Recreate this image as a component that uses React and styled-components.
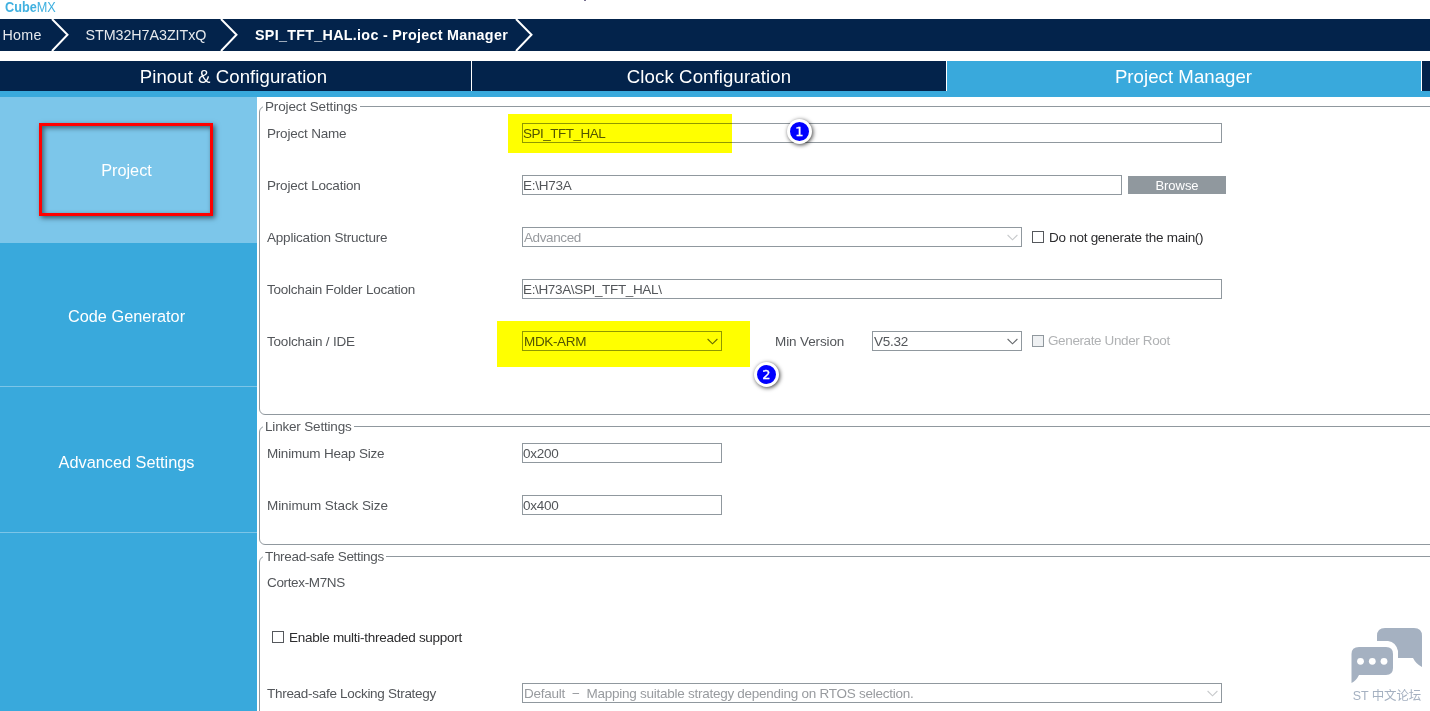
import React from "react";
import styled, { createGlobalStyle } from "styled-components";

const navy = "#03234b";
const sky = "#39a9dc";
const line = "#90989e";

const Global = createGlobalStyle`
  * { box-sizing: border-box; }
  html, body { margin: 0; height: 100%; overflow: hidden; background: #fff; }
  body { font-family: "Liberation Sans", Arial, "Noto Sans CJK SC", sans-serif; font-size: 13.5px; color: #53565a; }
`;

const Page = styled.div`
  position: relative;
  display: flex;
  flex-direction: column;
  width: 1430px;
  height: 711px;
  overflow: hidden;
  background: #fff;
  white-space: pre;
`;

const Header = styled.header`
  display: flex;
  height: 19px;
  padding-left: 5px;
  overflow: hidden;
`;

const Brand = styled.div`
  width: 51px;
  color: #41b1e0;
  font-size: 15.5px;
  line-height: 13px;
  transform: scaleX(0.82);
  transform-origin: 0 0;
`;

const Speck = styled.i`
  width: 2px;
  height: 1px;
  margin-left: 528px;
  background: #77708f;
`;

const Crumbs = styled.nav`
  display: flex;
  align-items: center;
  height: 32px;
  margin-bottom: 10px;
  background: ${navy};
  color: #e6e9ed;
  font-size: 14.3px;
`;

const Crumb = styled.span`
  width: ${(p) => p.$w}px;
  padding-left: ${(p) => p.$pad}px;
  color: ${(p) => (p.$bold ? "#fff" : "inherit")};
  font-weight: ${(p) => (p.$bold ? 700 : 400)};
  letter-spacing: ${(p) => p.$ls}px;
`;

const Tabs = styled.nav`
  display: flex;
  height: 36px;
  flex: none;
  border-bottom: 6px solid ${sky};
`;

const Tab = styled.div`
  width: ${(p) => p.$w}px;
  flex: none;
  padding-right: ${(p) => p.$shift || 0}px;
  border-right: 1px solid #fff;
  background: ${(p) => (p.$active ? sky : navy)};
  color: #fff;
  font-size: 18.6px;
  line-height: 32px;
  letter-spacing: ${(p) => p.$ls || 0}px;
  text-align: center;
`;

const Body = styled.div`
  display: flex;
  flex: 1;
  min-height: 0;
`;

const Sidebar = styled.aside`
  width: 257px;
  flex: none;
  background: ${sky};
`;

const SideItem = styled.div`
  display: flex;
  align-items: center;
  justify-content: center;
  height: ${(p) => p.$h}px;
  padding: ${(p) => p.$drop}px 4px 0 0;
  border-bottom: ${(p) => (p.$active ? "0" : "1px solid #7cc5e8")};
  background: ${(p) => (p.$active ? "#7cc6ea" : "transparent")};
  color: #fff;
  font-size: 16.3px;
  letter-spacing: ${(p) => p.$ls}px;
`;

const Panels = styled.main`
  display: flex;
  flex: 1;
  flex-direction: column;
  padding: 9px 0 0 2px;
  min-width: 0;
`;

const Group = styled.section`
  height: ${(p) => p.$h}px;
  flex: none;
  margin: 0 -10px 11px 0;
  border: 1px solid ${line};
  border-radius: 6px;
`;

const Legend = styled.h2`
  width: ${(p) => p.$w}px;
  height: 16px;
  margin: -8px 0 0 3px;
  padding-left: 2px;
  background: #fff;
  font-size: 13.5px;
  font-weight: 400;
  line-height: 16px;
  letter-spacing: ${(p) => p.$ls ?? -0.13}px;
`;

const Row = styled.div`
  display: flex;
  align-items: center;
  height: 20px;
  margin-top: ${(p) => p.$gap ?? 32}px;
  padding-left: 7px;
`;

const Label = styled.span`
  width: ${(p) => p.$w || 255}px;
  flex: none;
  margin-left: ${(p) => p.$ml || 0}px;
  letter-spacing: ${(p) => p.$ls ?? -0.2}px;
`;

const Field = styled.div`
  display: flex;
  align-items: center;
  justify-content: space-between;
  width: ${(p) => p.$w}px;
  height: 20px;
  flex: none;
  padding: 0 3.5px 0 ${(p) => (p.$select ? 1 : 0)}px;
  border: 1px solid ${line};
  background: #fff;
  color: ${(p) => (p.$off ? "#989b9f" : "#53565a")};
  letter-spacing: ${(p) => p.$ls ?? -0.27}px;
`;

const BrowseButton = styled.button`
  width: 98px;
  height: 18px;
  margin-left: 6px;
  padding: 1px 0 0;
  border: 0;
  background: #90989e;
  color: #fff;
  font: 13px/17px "Liberation Sans", sans-serif;
  letter-spacing: -0.05px;
`;

const Box = styled.i`
  width: 12px;
  height: 12px;
  flex: none;
  margin: 0 ${(p) => (p.$off ? 4 : 5)}px 0 ${(p) => p.$ml ?? 10}px;
  border: 1px solid ${(p) => (p.$off ? line : "#55585c")};
  background: ${(p) => (p.$off ? "#eff1f3" : "#fff")};
`;

const CheckLabel = styled.span`
  color: ${(p) => (p.$off ? "#b0b2b4" : "#2c2c2e")};
  margin-top: ${(p) => (p.$off ? -2 : 0)}px;
  letter-spacing: ${(p) => p.$ls ?? -0.27}px;
`;

const Highlight = styled.div`
  position: absolute;
  left: ${(p) => p.$x}px;
  top: ${(p) => p.$y}px;
  width: ${(p) => p.$w}px;
  height: ${(p) => p.$h}px;
  background: #ff0;
  mix-blend-mode: multiply;
`;

const Frame = styled.div`
  position: absolute;
  left: 39px;
  top: 123px;
  width: 174px;
  height: 93px;
  border: 3px solid #f00;
  box-shadow: 2px 2px 5px rgba(0, 0, 0, 0.55), inset 2px 2px 5px rgba(0, 0, 0, 0.5);
`;

const Badge = styled.div`
  position: absolute;
  left: ${(p) => p.$x}px;
  top: ${(p) => p.$y}px;
  width: 25px;
  height: 25px;
  border: 3px solid #fff;
  border-radius: 50%;
  background: #00f;
  box-shadow: 1px 1px 4px rgba(0, 0, 0, 0.75);
  color: #fff;
  font: 13px/19px "DejaVu Sans", sans-serif;
  -webkit-text-stroke: 0.3px #fff;
  text-align: center;
`;

const Watermark = styled.div`
  position: absolute;
  left: 1351px;
  top: 627px;
  width: 72px;
  color: #a5b1c1;
  font: 12.5px/20px "Liberation Sans", "Noto Sans CJK SC", sans-serif;
  letter-spacing: -0.1px;
  text-align: center;
  svg { display: block; }
`;

const Chevron = () => (
  <svg width="18" height="32" viewBox="0 0 18 32" fill="none" stroke="#fff" strokeWidth="2">
    <path d="M1 0L16.5 15.7L1 32" />
  </svg>
);

const Arrow = ({ off }) => (
  <svg width="11" height="7" viewBox="0 0 11 7" fill="none" stroke={off ? "#c8cacc" : "#66696d"} strokeWidth="1.1">
    <path d="M.6 1L5.5 5.8L10.4 1" />
  </svg>
);

export default function App() {
  return (
    <Page>
      <Global />
      <Header>
        <Brand><b>Cube</b>MX</Brand>
        <Speck />
      </Header>
      <Crumbs>
        <Crumb $w={51} $pad={2.5} $ls={0.25}>Home</Crumb>
        <Chevron />
        <Crumb $w={151} $pad={16.5} $ls={-0.05}>STM32H7A3ZITxQ</Crumb>
        <Chevron />
        <Crumb $w={277} $pad={17} $bold $ls={0.3}>SPI_TFT_HAL.ioc - Project Manager</Crumb>
        <Chevron />
      </Crumbs>
      <Tabs>
        <Tab $w={472} $shift={4} $ls={0.06}>Pinout &amp; Configuration</Tab>
        <Tab $w={475} $ls={0.12}>Clock Configuration</Tab>
        <Tab $w={475} $shift={1} $active $ls={0.05}>Project Manager</Tab>
        <Tab $w={9} />
      </Tabs>
      <Body>
        <Sidebar>
          <SideItem $h={146} $drop={0} $active>Project</SideItem>
          <SideItem $h={144} $drop={4} $ls={0.03}>Code Generator</SideItem>
          <SideItem $h={146} $drop={6} $ls={0}>Advanced Settings</SideItem>
        </Sidebar>
        <Panels>
          <Group $h={309}>
            <Legend $w={97}>Project Settings</Legend>
            <Row $gap={8}>
              <Label>Project Name</Label>
              <Field $w={700} $ls={-0.5}>SPI_TFT_HAL</Field>
            </Row>
            <Row>
              <Label>Project Location</Label>
              <Field $w={600}>E:\H73A</Field>
              <BrowseButton>Browse</BrowseButton>
            </Row>
            <Row>
              <Label>Application Structure</Label>
              <Field $w={500} $select $off $ls={-0.4}>Advanced<Arrow off /></Field>
              <Box />
              <CheckLabel>Do not generate the main()</CheckLabel>
            </Row>
            <Row>
              <Label $ls={-0.23}>Toolchain Folder Location</Label>
              <Field $w={700} $ls={-0.35}>E:\H73A\SPI_TFT_HAL\</Field>
            </Row>
            <Row>
              <Label>Toolchain / IDE</Label>
              <Field $w={200} $select $ls={-0.35}>MDK-ARM<Arrow /></Field>
              <Label $w={97} $ml={53} $ls={-0.12}>Min Version</Label>
              <Field $w={150} $select>V5.32<Arrow /></Field>
              <Box $off />
              <CheckLabel $off $ls={-0.38}>Generate Under Root</CheckLabel>
            </Row>
          </Group>
          <Group $h={119}>
            <Legend $w={91} $ls={-0.18}>Linker Settings</Legend>
            <Row $gap={8}>
              <Label>Minimum Heap Size</Label>
              <Field $w={200}>0x200</Field>
            </Row>
            <Row>
              <Label $ls={-0.08}>Minimum Stack Size</Label>
              <Field $w={200}>0x400</Field>
            </Row>
          </Group>
          <Group $h={200}>
            <Legend $w={123} $ls={-0.32}>Thread-safe Settings</Legend>
            <Row $gap={7}>
              <Label $ls={-0.35}>Cortex-M7NS</Label>
            </Row>
            <Row $gap={35}>
              <Box $ml={5} />
              <CheckLabel>Enable multi-threaded support</CheckLabel>
            </Row>
            <Row $gap={36}>
              <Label $ls={-0.29}>Thread-safe Locking Strategy</Label>
              <Field $w={700} $select $off $ls={-0.26}>Default  −  Mapping suitable strategy depending on RTOS selection.<Arrow off /></Field>
            </Row>
          </Group>
        </Panels>
      </Body>
      <Highlight $x={508} $y={114} $w={224} $h={39} />
      <Highlight $x={497} $y={321} $w={253} $h={46} />
      <Frame />
      <Badge $x={787} $y={119}>1</Badge>
      <Badge $x={754} $y={362}>2</Badge>
      <Watermark>
        <svg width="72" height="59" viewBox="0 0 72 59" fill="#a5b1c1">
          <path d="M26 14V9Q26 1 34 1H63Q71 1 71 9V40Q65 37 62 31H47V24Q45 15 37 14Z" />
          <path d="M8 20H35Q42 20 42 27V41Q42 48 35 48H8Q5 54 .5 56V27Q.5 20 8 20Z" />
          <g fill="#fff">
            <circle cx="9.5" cy="34.3" r="3.4" />
            <circle cx="21.3" cy="34.3" r="3.4" />
            <circle cx="33" cy="34.3" r="3.4" />
          </g>
        </svg>
        ST 中文论坛
      </Watermark>
    </Page>
  );
}
